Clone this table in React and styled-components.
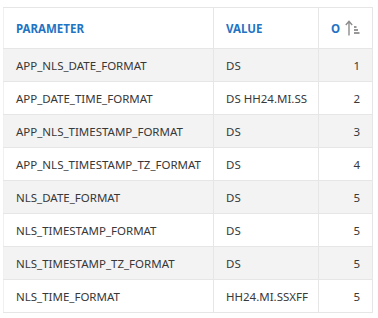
import React from 'react'
import styled, { createGlobalStyle } from 'styled-components'

const rows = [
  { name: 'APP_NLS_DATE_FORMAT', value: 'DS', order: 1 },
  { name: 'APP_DATE_TIME_FORMAT', value: 'DS HH24.MI.SS', order: 2 },
  { name: 'APP_NLS_TIMESTAMP_FORMAT', value: 'DS', order: 3 },
  { name: 'APP_NLS_TIMESTAMP_TZ_FORMAT', value: 'DS', order: 4 },
  { name: 'NLS_DATE_FORMAT', value: 'DS', order: 5 },
  { name: 'NLS_TIMESTAMP_FORMAT', value: 'DS', order: 5 },
  { name: 'NLS_TIMESTAMP_TZ_FORMAT', value: 'DS', order: 5 },
  { name: 'NLS_TIME_FORMAT', value: 'HH24.MI.SSXFF', order: 5 }
]

const SortIcon = () => (
  <svg width='17' height='16' viewBox='0 0 17 16'>
    <path d='M5 15.5V1.5M1.8 5l3.2-3.6L8.2 5' stroke='#8c8c8c' strokeWidth='1.4' fill='none' />
    <path d='M10 7h2.5M10 10h4M10 13h5.5' stroke='#333' strokeWidth='1' fill='none' />
  </svg>
)

export default function App () {
  return (
    <>
      <GlobalStyle />
      <Wrapper>
        <Table>
          <colgroup>
            <col style={{ width: 210 }} />
            <col style={{ width: 105 }} />
            <col style={{ width: 54 }} />
          </colgroup>
          <thead>
            <tr>
              <HeadCell>PARAMETER</HeadCell>
              <HeadCell>VALUE</HeadCell>
              <HeadCell align='right'>
                <SortLabel>
                  O<SortIcon />
                </SortLabel>
              </HeadCell>
            </tr>
          </thead>
          <tbody>
            {rows.map((row, i) => (
              <Row key={row.name} $striped={i % 2 === 0}>
                <Cell>{row.name}</Cell>
                <Cell>{row.value}</Cell>
                <Cell align='right'>{row.order}</Cell>
              </Row>
            ))}
          </tbody>
        </Table>
      </Wrapper>
    </>
  )
}

const GlobalStyle = createGlobalStyle`
  body {
    margin: 0;
    background: #fff;
    font-family: 'Noto Sans', sans-serif;
  }
`
const Wrapper = styled.div`
  padding: 7px 6px 0 3px;
`
const Table = styled.table`
  width: 369px;
  border-collapse: collapse;
  table-layout: fixed;
  border-top: 1px solid #e6e6e6;
  border-left: 1px solid #f0f0f0;
`
const HeadCell = styled.th`
  height: 40px;
  padding: 0 12px;
  text-align: ${p => (p.align === 'right' ? 'right' : 'left')};
  font-size: 11.5px;
  font-weight: 700;
  color: #1f74c4;
  border-right: 1px solid #e6e6e6;
  border-bottom: 1px solid #e6e6e6;
`
const SortLabel = styled.span`
  display: inline-flex;
  align-items: center;
  gap: 4px;
  margin-right: -1px;
`
const Row = styled.tr`
  background: ${p => (p.$striped ? '#f3f3f3' : '#fff')};
`
const Cell = styled.td`
  height: 32px;
  padding: 0 12px;
  text-align: ${p => (p.align === 'right' ? 'right' : 'left')};
  font-size: 11.5px;
  color: #383838;
  white-space: nowrap;
  border-right: 1px solid #e6e6e6;
  border-bottom: 1px solid #e6e6e6;
`
